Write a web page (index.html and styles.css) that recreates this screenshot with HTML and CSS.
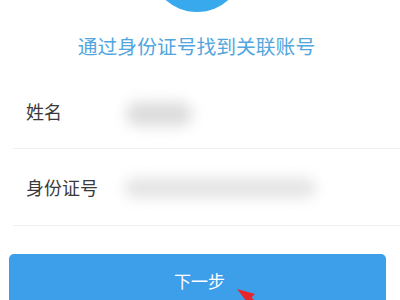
FILE: index.html
```html
<!DOCTYPE html>
<html lang="zh-CN">
<head>
    <meta charset="UTF-8" />
    <meta name="viewport" content="width=device-width, initial-scale=1.0" />
    <title>找回账号</title>
    <link rel="stylesheet" href="styles.css">
</head>
<body>

<div class="logo"></div>

<h1 class="title">通过身份证号找到关联账号</h1>

<div class="form">
    <div class="form-row">
        <span class="form-label">姓名</span>
        <span class="blur blur-name"></span>
    </div>
    <div class="form-row">
        <span class="form-label">身份证号</span>
        <span class="blur blur-id"></span>
    </div>
</div>

<button class="next-btn">下一步</button>

<!-- annotation arrow -->
<svg class="arrow" width="40" height="20" viewBox="0 0 40 20">
    <polygon points="0,2 18,7 10,15" fill="#e6262b" />
    <polygon points="12,8 24,20 14,20 10,12" fill="#e6262b" />
</svg>

</body>
</html>
```

FILE: styles.css
```css
body {
    margin: 0;
    width: 400px;
    height: 300px;
    overflow: hidden;
    position: relative;
    background: #fff;
    font-family: "Noto Sans CJK SC", "Noto Sans", sans-serif;
    color: #333;
}

.logo {
    width: 94px;
    height: 94px;
    border-radius: 50%;
    background: #39a9ed;
    margin: -82px 0 0 150px;
}

.title {
    margin: 22px 0 0;
    padding-right: 7px;
    text-align: center;
    font-size: 19.8px;
    line-height: 24px;
    font-weight: 400;
    color: #52a6de;
}

.form {
    margin: 15px 0 0 13px;
}

.form-row {
    display: flex;
    align-items: center;
    height: 76px;
    border-bottom: 1px solid #f0f0f0;
    padding-left: 13px;
}

.form-row:first-child {
    height: 75px;
}

.form-label {
    width: 88px;
    font-size: 18px;
    color: #3a3a3a;
}

.blur {
    display: block;
    background: #dcdcdc;
    filter: blur(7px);
    border-radius: 14px;
}

.blur-name {
    width: 66px;
    height: 24px;
    margin: 6px 0 0 12px;
}

.blur-id {
    width: 192px;
    height: 20px;
    margin: 2px 0 0 10px;
    background: #e4e4e4;
}

.next-btn {
    display: block;
    margin: 28px 0 0 9px;
    width: 377px;
    height: 52px;
    border: none;
    border-radius: 5px;
    background: #3d9ee9;
    color: #fff;
    font-family: inherit;
    font-size: 17px;
    padding: 0 0 0 4px;
}

.arrow {
    position: absolute;
    left: 237px;
    top: 287px;
}
```
